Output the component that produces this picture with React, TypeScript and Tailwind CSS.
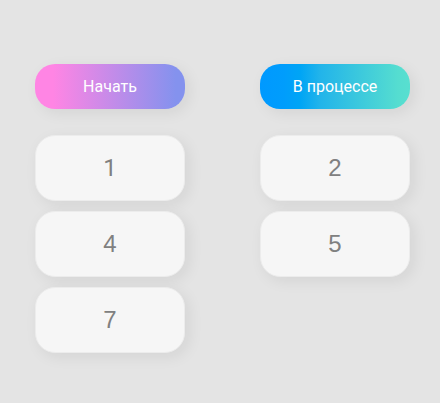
const columns = [
  { title: "Начать", gradient: "bg-[linear-gradient(90deg,#ff85e4_0%,#ff85e4_12%,#8492ee_94%,#8492ee_100%)]", items: [1, 4, 7] },
  { title: "В процессе", gradient: "bg-[linear-gradient(90deg,#0099ff_0%,#009dfc_16%,#00a5f5_27%,#22b4ea_40%,#55ddd0_92%,#58dfd0_100%)]", items: [2, 5] },
];

export default function App() {
  return (
    <main className="flex h-[403px] w-[440px] items-start gap-[75px] overflow-hidden bg-[#e4e4e4] pt-16 pl-[35px]">
      {columns.map((column) => (
        <section key={column.title} className="w-[150px]">
          <h2 className={`flex h-[45px] items-center justify-center rounded-[20px] font-[Roboto,sans-serif] text-base font-normal text-white shadow-[4px_4px_15px_rgba(0,0,0,0.07)] ${column.gradient}`}>
            {column.title}
          </h2>
          <div className="mt-[26px] flex flex-col gap-2.5">
            {column.items.map((item) => (
              <div key={item} className={`flex h-[66px] items-center justify-center rounded-[20px] border border-[#ececec] bg-[#f6f6f6] text-2xl text-[#808080] shadow-[4px_4px_15px_rgba(0,0,0,0.07)] ${item === 1 ? "font-[Roboto,sans-serif]" : "font-['Liberation_Sans',Arial,sans-serif]"}`}>
                {item}
              </div>
            ))}
          </div>
        </section>
      ))}
    </main>
  );
}
